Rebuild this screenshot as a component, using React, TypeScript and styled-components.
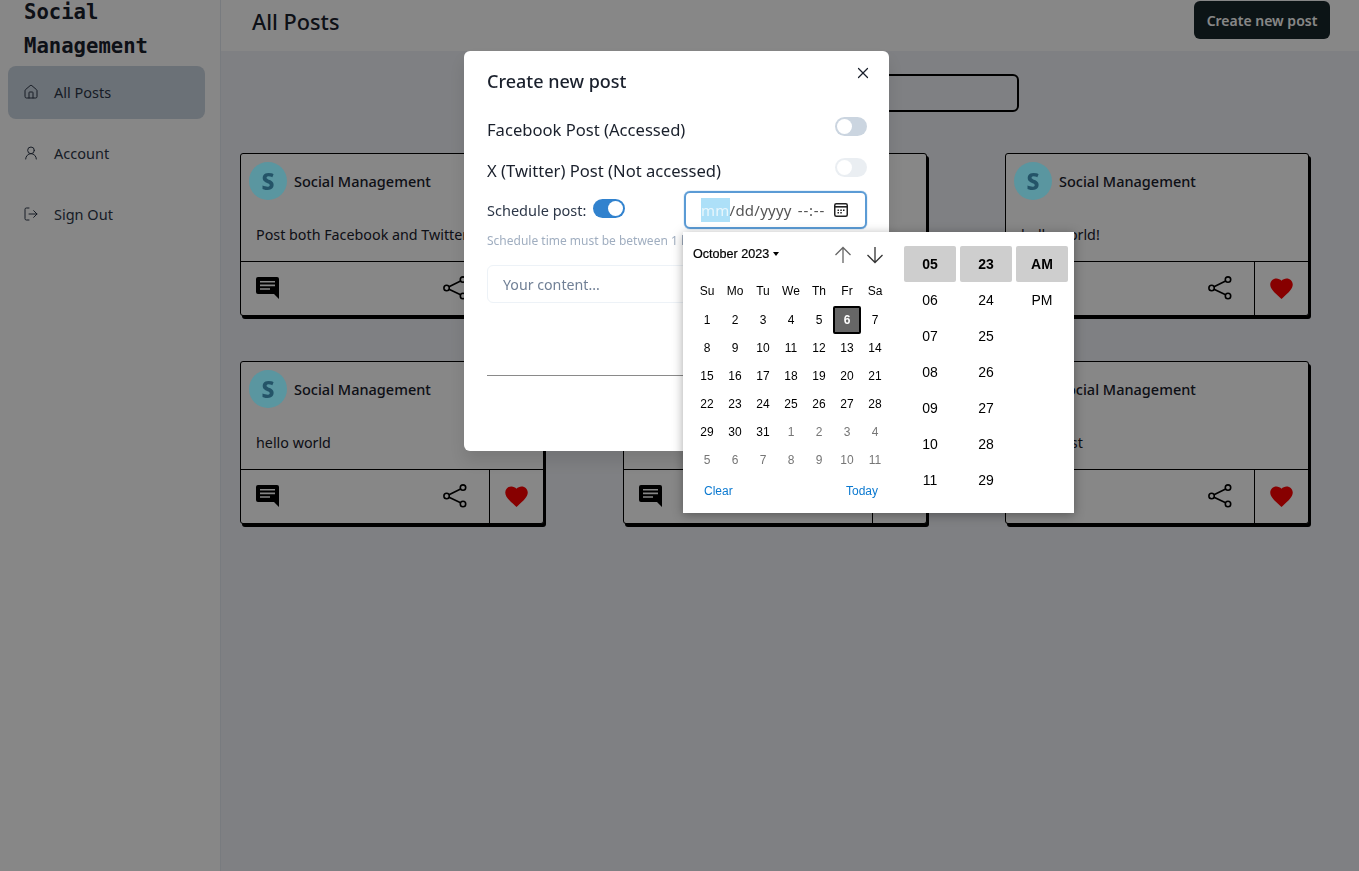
import styled, { createGlobalStyle } from "styled-components";
import { House, LogOut, UserRound, X } from "lucide-react";

const GlobalStyle = createGlobalStyle`
  html, body {
    margin: 0;
    padding: 0;
    height: 100%;
    overflow: hidden;
    font-family: "Noto Sans", "Open Sans", sans-serif;
    color: #1a202c;
  }
  * { box-sizing: border-box; }
`;

interface Post {
  id: number;
  content: string;
}

const POSTS: Post[] = [
  { id: 1, content: "Post both Facebook and Twitter" },
  { id: 2, content: "hello world" },
  { id: 3, content: "hello world!" },
  { id: 4, content: "hello world" },
  { id: 5, content: "hello world" },
  { id: 6, content: "hello test" },
];

const WEEK_DAYS = ["Su", "Mo", "Tu", "We", "Th", "Fr", "Sa"];
const OCTOBER = Array.from({ length: 31 }, (_, i) => i + 1);
const NOVEMBER = Array.from({ length: 11 }, (_, i) => i + 1);
const HOURS = ["05", "06", "07", "08", "09", "10", "11"];
const MINUTES = ["23", "24", "25", "26", "27", "28", "29"];
const PERIODS = ["AM", "PM"];

const CommentIcon = () => (
  <svg width="23" height="22" viewBox="0 0 23 22">
    <path
      fillRule="evenodd"
      fill="#000"
      d="M2 0h19a2 2 0 0 1 2 2v20l-5-5H2a2 2 0 0 1-2-2V2a2 2 0 0 1 2-2zM4 4v1.6h15V4zM4 7.6v1.6h15V7.6zM4 11.2v1.6h10v-1.6z"
    />
  </svg>
);

const ShareIcon = () => (
  <svg width="24" height="24" viewBox="0 0 24 24" fill="none" stroke="#000" strokeWidth="1.6">
    <circle cx="3.6" cy="12" r="2.7" />
    <circle cx="20" cy="3.6" r="2.7" />
    <circle cx="20" cy="20" r="2.7" />
    <path d="M6 10.7 17.6 5M6 13.3 17.6 18.8" />
  </svg>
);

const HeartIcon = () => (
  <svg width="27" height="27" viewBox="0 0 24 24" fill="#ff0000">
    <path d="M12 21.35l-1.45-1.32C5.4 15.36 2 12.28 2 8.5 2 5.42 4.42 3 7.5 3c1.74 0 3.41.81 4.5 2.09C13.09 3.81 14.76 3 16.5 3 19.58 3 22 5.42 22 8.5c0 3.78-3.4 6.86-8.55 11.54L12 21.35z" />
  </svg>
);

const ArrowIcon = ({ down }: { down?: boolean }) => (
  <svg width="18" height="18" viewBox="0 0 18 18" fill="none" stroke={down ? "#333" : "#666"} strokeWidth="1.3">
    {down ? <path d="M9 1v15.5M1.5 9 9 16.5 16.5 9" /> : <path d="M9 17V1.5M1.5 9 9 1.5 16.5 9" />}
  </svg>
);

const CalendarIcon = () => (
  <svg width="14" height="14" viewBox="0 0 14 14">
    <rect x="0.75" y="0.75" width="12.5" height="12.5" rx="1.5" fill="none" stroke="#222" strokeWidth="1.5" />
    <path d="M1 3h12v1.6H1z" fill="#222" />
    <path d="M3.5 6.5h1.5V8H3.5zM6.3 6.5h1.5V8H6.3zM9 6.5h1.5V8H9zM3.5 9h1.5v1.5H3.5zM6.3 9h1.5v1.5H6.3z" fill="#222" />
  </svg>
);

const PostCard = ({ post }: { post: Post }) => (
  <Card>
    <CardHead>
      <Avatar>S</Avatar>
      <AuthorName>Social Management</AuthorName>
    </CardHead>
    <CardText>{post.content}</CardText>
    <CardActions>
      <CommentCell>
        <CommentIcon />
        <ShareIcon />
      </CommentCell>
      <HeartCell>
        <HeartIcon />
      </HeartCell>
    </CardActions>
  </Card>
);

const DateTimePopup = () => (
  <Popup>
    <CalendarPane>
      <CalendarHead>
        <MonthLabel>
          October 2023 <Caret />
        </MonthLabel>
        <ArrowGroup>
          <ArrowIcon />
          <ArrowIcon down />
        </ArrowGroup>
      </CalendarHead>
      <WeekRow>
        {WEEK_DAYS.map((d) => (
          <DayCell key={d}>{d}</DayCell>
        ))}
      </WeekRow>
      <DayGrid>
        {OCTOBER.slice(0, 5).map((d) => (
          <DayCell key={d}>{d}</DayCell>
        ))}
        <SelectedDay>6</SelectedDay>
        {OCTOBER.slice(6).map((d) => (
          <DayCell key={d}>{d}</DayCell>
        ))}
        {NOVEMBER.map((d) => (
          <DayCell key={`next-${d}`} $muted>
            {d}
          </DayCell>
        ))}
      </DayGrid>
      <CalendarFoot>
        <FootLink>Clear</FootLink>
        <FootLink>Today</FootLink>
      </CalendarFoot>
    </CalendarPane>
    <TimePane>
      {[HOURS, MINUTES, PERIODS].map((col) => (
        <TimeColumn key={col[0]}>
          {col.map((value, i) => (
            <TimeCell key={value} $selected={i === 0}>
              {value}
            </TimeCell>
          ))}
        </TimeColumn>
      ))}
    </TimePane>
  </Popup>
);

export default function App() {
  return (
    <>
      <GlobalStyle />
      <Layout>
        <Sidebar>
          <Brand>Social Management</Brand>
          <NavList>
            <NavItem $active>
              <House size={16} strokeWidth={1.5} />
              All Posts
            </NavItem>
            <NavItem>
              <UserRound size={16} strokeWidth={1.5} />
              Account
            </NavItem>
            <NavItem>
              <LogOut size={16} strokeWidth={1.5} />
              Sign Out
            </NavItem>
          </NavList>
        </Sidebar>
        <Main>
          <Header>
            <PageTitle>All Posts</PageTitle>
            <CreateButton>Create new post</CreateButton>
          </Header>
          <SearchRow>
            <SearchBox />
          </SearchRow>
          <PostGrid>
            {POSTS.map((post) => (
              <PostCard key={post.id} post={post} />
            ))}
          </PostGrid>
        </Main>
      </Layout>
      <Backdrop />
      <ModalLayer>
        <Modal>
          <ModalTitle>Create new post</ModalTitle>
          <CloseButton>
            <X size={18} strokeWidth={1.6} />
          </CloseButton>
          <AccessRow>
            <span>Facebook Post (Accessed)</span>
            <Toggle />
          </AccessRow>
          <AccessRow>
            <span>X (Twitter) Post (Not accessed)</span>
            <Toggle $disabled />
          </AccessRow>
          <ScheduleRow>
            <ScheduleLabel>
              Schedule post:
              <ScheduleToggle $on />
            </ScheduleLabel>
            <DateField>
              <DateText>
                <Selected>mm</Selected>/dd/yyyy
                <TimeMask>--:--</TimeMask>
              </DateText>
              <CalendarIcon />
              <DateTimePopup />
            </DateField>
          </ScheduleRow>
          <HelpText>Schedule time must be between 1 hour and 30 days</HelpText>
          <ContentBox>Your content...</ContentBox>
          <ModalRule />
        </Modal>
      </ModalLayer>
    </>
  );
}

const Layout = styled.div`
  display: flex;
  min-height: 100vh;
`;

const Sidebar = styled.aside`
  flex: 0 0 221px;
  background: #fff;
  border-right: 1px solid #e2e8f0;
`;

const Brand = styled.h1`
  margin: -5px 0 3px;
  padding: 0 40px 0 24px;
  font-family: "DejaVu Sans Mono", monospace;
  font-size: 20.6px;
  line-height: 34px;
  font-weight: 700;
`;

const NavList = styled.nav`
  display: flex;
  flex-direction: column;
  gap: 8px;
  padding: 0 15px 0 8px;
`;

const NavItem = styled.div<{ $active?: boolean }>`
  display: flex;
  align-items: center;
  gap: 15px;
  height: 53px;
  padding: 0 0 2px 15px;
  border-radius: 8px;
  font-size: 14.5px;
  background: ${({ $active }) => ($active ? "#cbd5e0" : "transparent")};
  color: #2d3748;
`;

const Main = styled.main`
  flex: 1;
  background: #f0f2f7;
`;

const Header = styled.header`
  display: flex;
  align-items: center;
  justify-content: space-between;
  height: 51px;
  padding: 0 29px 11px 31px;
  background: #fff;
`;

const PageTitle = styled.h2`
  margin: 4px 0 0;
  font-size: 21.7px;
  line-height: 30px;
  font-weight: 500;
`;

const CreateButton = styled.button`
  height: 38px;
  width: 136px;
  border: none;
  border-radius: 6px;
  background: #18262a;
  color: #fff;
  font-family: inherit;
  font-size: 14px;
  font-weight: 600;
`;

const SearchRow = styled.div`
  display: flex;
  justify-content: flex-end;
  padding: 23px 340px 0 0;
`;

const SearchBox = styled.div`
  width: 456px;
  height: 38px;
  border: 2px solid #000;
  border-radius: 6px;
`;

const PostGrid = styled.section`
  display: grid;
  grid-template-columns: repeat(3, 304px);
  justify-content: space-between;
  row-gap: 45px;
  padding: 41px 50px 0 19px;
`;

const Card = styled.article`
  height: 163px;
  display: flex;
  flex-direction: column;
  background: #fff;
  border: 1px solid #000;
  border-radius: 3px;
  box-shadow: 2px 3px 0 #000;
`;

const CardHead = styled.div`
  display: flex;
  align-items: center;
  gap: 7px;
  padding: 8px 8px 0;
`;

const Avatar = styled.div`
  position: relative;
  z-index: 2;
  width: 38px;
  height: 38px;
  border-radius: 50%;
  background: #5a96a0;
  color: #245468;
  display: flex;
  align-items: center;
  justify-content: center;
  font-size: 23px;
  font-weight: 800;
`;

const AuthorName = styled.span`
  font-size: 14.5px;
  font-weight: 500;
`;

const CardText = styled.p`
  flex: 1;
  margin: 0;
  padding: 24px 15px 0;
  font-size: 14.3px;
  line-height: 21px;
  white-space: nowrap;
  overflow: hidden;
`;

const CardActions = styled.div`
  display: flex;
  height: 54px;
  border-top: 1px solid #000;
`;

const CommentCell = styled.div`
  flex: 1;
  display: flex;
  align-items: center;
  justify-content: space-between;
  padding: 0 22px 1px 15px;
`;

const HeartCell = styled.div`
  flex: 0 0 54px;
  display: flex;
  align-items: center;
  justify-content: center;
  padding-bottom: 1px;
  border-left: 1px solid #000;
`;

const Backdrop = styled.div`
  position: fixed;
  inset: 0;
  z-index: 1;
  background: rgba(0, 0, 0, 0.47);
`;

const ModalLayer = styled.div`
  position: fixed;
  inset: 0;
  z-index: 3;
  display: flex;
  justify-content: center;
  align-items: flex-start;
  padding: 51px 6px 0 0;
`;

const Modal = styled.div`
  position: relative;
  width: 425px;
  height: 400px;
  padding: 16px 22px 0 23px;
  background: #fff;
  border-radius: 6px;
  box-shadow: 0 10px 15px rgba(0, 0, 0, 0.1);
`;

const ModalTitle = styled.h3`
  margin: 0 0 22px;
  font-size: 18px;
  line-height: 28px;
  font-weight: 500;
`;

const CloseButton = styled.div`
  position: absolute;
  top: 13px;
  right: 17px;
  display: flex;
  color: #1a202c;
`;

const AccessRow = styled.div`
  display: flex;
  align-items: flex-start;
  justify-content: space-between;
  height: 26px;
  margin-bottom: 15px;
  font-size: 16.6px;
  line-height: 26px;
`;

const Toggle = styled.span<{ $on?: boolean; $disabled?: boolean }>`
  position: relative;
  display: inline-block;
  width: 32px;
  height: 19px;
  border-radius: 10px;
  background: ${({ $on }) => ($on ? "#3182ce" : "#cbd5e0")};
  opacity: ${({ $disabled }) => ($disabled ? 0.4 : 1)};

  &::after {
    content: "";
    position: absolute;
    top: 2px;
    left: ${({ $on }) => ($on ? "15px" : "2px")};
    width: 15px;
    height: 15px;
    border-radius: 50%;
    background: #fff;
  }
`;

const ScheduleToggle = styled(Toggle)`
  margin-bottom: 4px;
`;

const ScheduleRow = styled.div`
  display: flex;
  align-items: center;
  justify-content: space-between;
  margin-top: -8px;
`;

const ScheduleLabel = styled.label`
  display: flex;
  align-items: center;
  gap: 7px;
  font-size: 14.5px;
  color: #2d3748;
`;

const DateField = styled.div`
  position: relative;
  display: flex;
  align-items: center;
  justify-content: space-between;
  width: 183px;
  height: 38px;
  padding: 0 17px 0 15px;
  border: 2px solid #5b9bd5;
  border-radius: 6px;
  box-shadow: 0 0 1px #3182ce;
`;

const DateText = styled.span`
  font-size: 15px;
  color: #555;
  letter-spacing: 0.25px;
`;

const TimeMask = styled.span`
  margin-left: 6px;
  letter-spacing: 0.8px;
`;

const Selected = styled.span`
  background: #ade0f8;
  color: #e8f6fc;
  padding: 2px 0;
`;

const HelpText = styled.p`
  margin: 2px 0 0;
  font-size: 12px;
  line-height: 20px;
  color: #a0aec0;
  white-space: nowrap;
`;

const ContentBox = styled.div`
  height: 38px;
  margin-top: 14px;
  padding: 0 15px;
  display: flex;
  align-items: center;
  border: 1px solid #edf2f7;
  border-radius: 6px;
  font-size: 14.2px;
  color: #718096;
`;

const ModalRule = styled.hr`
  margin: 72px 0 0;
  border: none;
  border-top: 1px solid #8a8a8a;
`;

const Popup = styled.div`
  position: absolute;
  top: 39px;
  left: -3px;
  display: flex;
  width: 391px;
  height: 281px;
  padding: 14px 6px 0 10px;
  background: #fff;
  box-shadow: 0 2px 10px rgba(0, 0, 0, 0.35);
  font-family: "Liberation Sans", Arial, sans-serif;
  color: #000;
`;

const CalendarPane = styled.div`
  width: 196px;
  margin-right: 15px;
`;

const CalendarHead = styled.div`
  display: flex;
  align-items: center;
  justify-content: space-between;
  height: 18px;
  padding-right: 5px;
`;

const MonthLabel = styled.span`
  display: flex;
  align-items: center;
  gap: 4px;
  margin-top: -2px;
  font-size: 12.6px;
  font-weight: 500;
  -webkit-text-stroke: 0.2px #000;
`;

const Caret = styled.i`
  border-left: 3.5px solid transparent;
  border-right: 3.5px solid transparent;
  border-top: 4px solid #000;
`;

const ArrowGroup = styled.div`
  display: flex;
  gap: 14px;
`;

const WeekRow = styled.div`
  display: grid;
  grid-template-columns: repeat(7, 28px);
  grid-auto-rows: 28px;
  margin-top: 13px;
`;

const DayGrid = styled.div`
  display: grid;
  grid-template-columns: repeat(7, 28px);
  grid-auto-rows: 28px;
  margin-top: 1px;
`;

const DayCell = styled.span<{ $muted?: boolean }>`
  display: flex;
  align-items: center;
  justify-content: center;
  font-size: 12px;
  color: ${({ $muted }) => ($muted ? "#767676" : "#000")};
`;

const SelectedDay = styled(DayCell)`
  background: #666;
  border: 2px solid #000;
  border-radius: 2px;
  color: #fff;
  font-weight: 700;
`;

const CalendarFoot = styled.div`
  display: flex;
  justify-content: space-between;
  padding: 5px 11px 0;
`;

const FootLink = styled.span`
  font-size: 12px;
  line-height: 24px;
  color: #0b79d0;
`;

const TimePane = styled.div`
  display: flex;
  gap: 4px;
`;

const TimeColumn = styled.div`
  width: 52px;
  display: flex;
  flex-direction: column;
`;

const TimeCell = styled.span<{ $selected?: boolean }>`
  height: 36px;
  display: flex;
  align-items: center;
  justify-content: center;
  border-radius: 2px;
  font-size: 14px;
  font-weight: ${({ $selected }) => ($selected ? 700 : 400)};
  background: ${({ $selected }) => ($selected ? "#cecece" : "transparent")};
`;
